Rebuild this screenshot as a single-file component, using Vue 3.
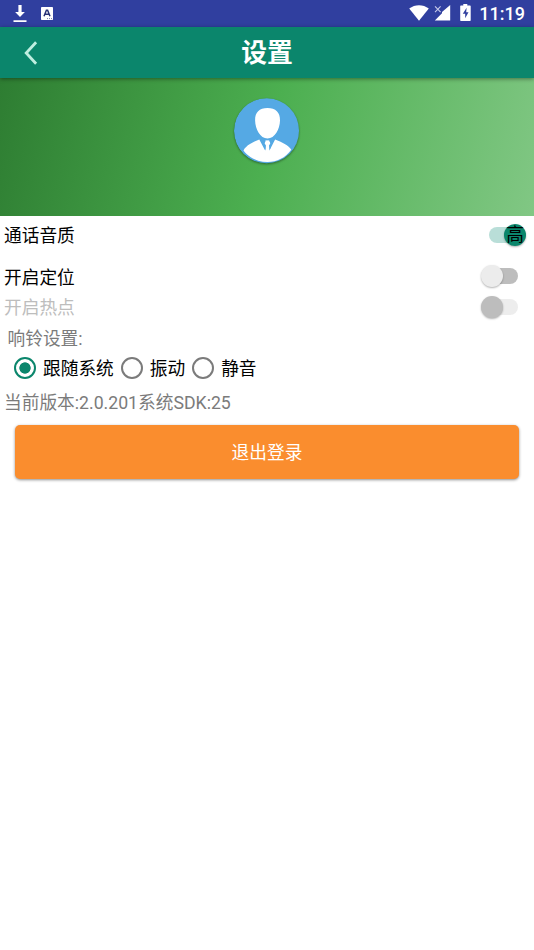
<script setup>
import { ref } from 'vue'

const switches = ref([
  { label: '通话音质', kind: 'quality', thumb: '高' },
  { label: '开启定位', kind: 'off', thumb: '' },
  { label: '开启热点', kind: 'disabled', thumb: '' }
])
const modes = ['跟随系统', '振动', '静音']
const mode = ref('跟随系统')
</script>

<template>
  <div class="screen">
    <header class="status">
      <svg class="download" viewBox="0 0 14 18">
        <path d="M5.4 0h3.2v7h3.3L7 12 2.1 7h3.3zM.5 15.2h13v1.8H.5z" fill="#fff" />
      </svg>
      <svg class="keyboard" viewBox="0 0 12 13">
        <rect width="12" height="13" rx=".8" fill="#fff" />
        <path d="M3 9.2 5.4 3.3h1.2L9 9.2M4.1 7.3h3.8" fill="none" stroke="#283276" stroke-width="1.5" />
        <path d="M6 11.6h1M8 11.6h1M10 11.6h1" stroke="#555d99" stroke-width=".8" />
      </svg>
      <span class="spacer"></span>
      <svg class="wifi" viewBox="0 0 20 16">
        <path d="M.2 3.6C6-.9 14-.9 19.8 3.6L10 15.8z" fill="#fff" />
      </svg>
      <svg class="signal" viewBox="0 0 17 16">
        <path d="M16.2 0v15.6H.8L8 8.3V7z" fill="#fff" />
        <path d="m1 1.4 5.6 5.8M6.6 1.4 1 7.2" stroke="#c7caea" stroke-width="1.1" />
      </svg>
      <svg class="battery" viewBox="0 0 11 17">
        <path d="M3.3 0h4v1.6H10q.7 0 .7.7v14q0 .7-.7.7H.9q-.7 0-.7-.7v-14q0-.7.7-.7h2.4z" fill="#fff" />
        <path d="M6.6 3.8 2.8 9.8h2.4v4.5l3.3-6H6.2z" fill="#303f9f" />
      </svg>
      <span class="clock">11:19</span>
    </header>

    <nav class="toolbar">
      <svg class="back" viewBox="0 0 14 24">
        <path d="M12.1 1.2 2.2 12l9.9 10.8" fill="none" stroke="#bfeee0" stroke-width="2.8" />
      </svg>
      <h1>设置</h1>
    </nav>

    <section class="profile">
      <svg class="avatar" viewBox="0 0 66 66">
        <circle cx="32.5" cy="32.7" r="32.5" fill="#55a9e4" />
        <path d="M33.5 10c8.2 0 12.7 4.2 12.5 12.5-.2 8.8-5.2 18-12.5 18S21.3 31.3 21.1 22.5C20.9 14.2 25.3 10 33.5 10z" fill="#fff" />
        <path d="M25.3 41.5 31 52.2l.4-5-1.4-2 1.8-2.500h3l1.8 2.5-1.4 2 .4 5 5.500-10.700C47.5 44 55 47.3 57.3 51.8 51.5 59.8 43 64 33.5 64S15 59.8 9.5 52.4C12 47.3 19.1 44 25.3 41.5z" fill="#fff" />
        <path d="M31.6 42.6h3.6l1.4 2.6-1.4 2.3.7 6.5h-4.8l.6-6.5-1.4-2.3z" fill="#fff" />
        <path d="m27.8 42.5 3.8 10.2.3-5.2-1.3-2.2 1-2.3zM39.2 42.5l-3.8 10.2-.3-5.2 1.3-2.2-1-2.3z" fill="#55a9e4" />
      </svg>
    </section>

    <main>
      <div v-for="item in switches" :key="item.label" class="setting" :class="item.kind">
        <span class="label">{{ item.label }}</span>
        <span class="switch"><span class="thumb">{{ item.thumb }}</span></span>
      </div>

      <p class="ring-title">响铃设置:</p>
      <div class="radios">
        <label v-for="name in modes" :key="name" class="radio" :class="{ selected: mode === name }" @click="mode = name">
          <span class="dot"></span><span class="name">{{ name }}</span>
        </label>
      </div>
      <p class="version">当前版本:2.0.201系统SDK:25</p>
      <button class="logout">退出登录</button>
    </main>
  </div>
</template>

<style>
body {
  margin: 0;
  background: #fff;
}
</style>

<style scoped>
.screen {
  height: 950px;
  overflow: hidden;
  background: #fff;
  color: #000;
  font: 17.7px/26px Roboto, "Noto Sans CJK SC", sans-serif;
}
.status {
  height: 27px;
  display: flex;
  align-items: center;
  box-sizing: border-box;
  padding: 0 9px 0 13px;
  background: #303f9f;
}
svg {
  display: block;
  flex: none;
}
.download { width: 14px; height: 18px; margin-top: 1px; }
.keyboard { width: 12px; height: 13px; margin-left: 14px; }
.spacer { flex: 1; }
.wifi { width: 20px; height: 16px; margin: -1px 5px 0 0; }
.signal { width: 17px; height: 16px; margin: -1px 9px 0 0; }
.battery { width: 11px; height: 17px; margin: -2px 8px 0 0; }
.clock {
  color: #fff;
  font-size: 18px;
  font-weight: 500;
}
.toolbar {
  position: relative;
  z-index: 1;
  height: 51px;
  display: grid;
  grid-template-columns: 60px 1fr 60px;
  align-items: center;
  background: #0b866c;
  box-shadow: 0 1px 4px rgba(0, 0, 0, .42);
}
.back { width: 14px; height: 24px; margin-left: 24px; }
h1 {
  margin: 0;
  color: #fff;
  text-align: center;
  font-size: 25.8px;
  line-height: 38px;
  font-weight: 700;
}
.profile {
  height: 138px;
  box-sizing: border-box;
  padding-top: 20px;
  display: flex;
  justify-content: center;
  align-items: flex-start;
  background: linear-gradient(104.5deg, #2e7d32, #4caf50 50%, #81c784);
}
.avatar {
  width: 66px;
  height: 66px;
  border-radius: 50%;
  filter: drop-shadow(0 1px 1px rgba(0, 0, 0, .4));
}
.setting {
  box-sizing: border-box;
  display: flex;
  align-items: center;
  justify-content: space-between;
  padding: 0 16px 0 4px;
}
.setting.quality {
  height: 38px;
  padding-right: 8px;
}
.setting.off {
  height: 38px;
  padding-top: 6px;
}
.setting.disabled { height: 30px; color: #bdbdbd; }
.quality .label { padding-top: 2px; }
.off .label { padding-top: 4px; }
.disabled .label { padding-top: 1px; }
.switch {
  width: 37px;
  height: 16px;
  display: flex;
  align-items: center;
  box-sizing: border-box;
  background: linear-gradient(#bdbdbd, #bdbdbd) 100% 50% / 27px 16px no-repeat;
  border-radius: 8px;
}
.disabled .switch { background-image: linear-gradient(#ededed, #ededed); }
.quality .switch {
  justify-content: flex-end;
  background: linear-gradient(90deg, #b9ded8, #b9ded8) 0 50% / 30px 16px no-repeat;
}
.thumb {
  flex: none;
  width: 22px;
  height: 22px;
  border-radius: 50%;
  background: #ececec;
  box-shadow: 0 1px 2px rgba(0, 0, 0, .3);
  text-align: center;
  line-height: 23px;
}
.disabled .thumb { background: #bdbdbd; }
.quality .thumb { background: #0b866c; }
p {
  margin: 0;
  color: #7b7b7b;
}
.ring-title {
  height: 32px;
  line-height: 34px;
  padding-left: 7.5px;
}
.radios {
  height: 27px;
  display: flex;
  align-items: center;
  gap: 7px;
  padding-left: 14px;
}
.radio {
  display: flex;
  align-items: center;
  gap: 7px;
}
.name { padding-top: 2px; }
.dot {
  width: 22px;
  height: 22px;
  box-sizing: border-box;
  border: 2px solid #7b7b7b;
  border-radius: 50%;
}
.selected .dot {
  border-color: #0b866c;
  background: radial-gradient(circle, #0b866c 5.3px, transparent 6px);
}
.version {
  height: 44px;
  line-height: 45px;
  padding-left: 4px;
}
.logout {
  display: block;
  width: 504px;
  height: 54px;
  margin: 0 auto;
  padding: 1px 0 0;
  border: 0;
  border-radius: 5px;
  background: #fa8d2e;
  box-shadow: 0 1px 3px rgba(0, 0, 0, .45);
  color: #fff;
  font: inherit;
}
</style>
